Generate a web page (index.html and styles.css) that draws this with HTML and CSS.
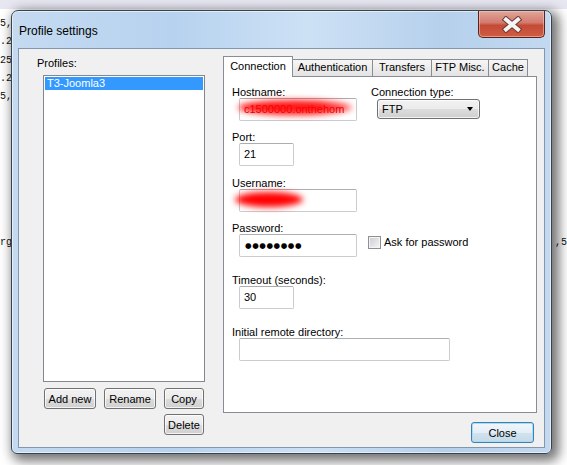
FILE: index.html
```html
<!DOCTYPE HTML>
<html>
    <head>
        <meta charset="UTF-8">
        <title>Profile settings</title>
        <link rel="stylesheet" href="styles.css">
    </head>
    <body>
        <div class="desktop">
            <div class="strip"></div>
            <!-- 窗口后面的编辑器文字 -->
            <div class="code">
                <div class="codeL">5,<br>.2<br>25<br>.2<br>5,</div>
                <div class="codeRow"><span>rg</span><span>,5</span></div>
            </div>

            <div class="window">
                <div class="titlebar">
                    <span class="title">Profile settings</span>
                    <button class="capClose">
                        <svg width="22" height="17" viewBox="0 0 22 17">
                            <path d="M5 3.5 L17 13.5 M17 3.5 L5 13.5" stroke="#6e3a33" stroke-width="6" stroke-linecap="square" fill="none"/>
                            <path d="M5 3.5 L17 13.5 M17 3.5 L5 13.5" stroke="#f4f4f4" stroke-width="4" stroke-linecap="square" fill="none"/>
                        </svg>
                    </button>
                </div>

                <div class="client">
                    <!-- 左侧：配置列表 -->
                    <div class="profiles">
                        <div class="lbl">Profiles:</div>
                        <div class="listbox">
                            <div class="item sel">T3-Joomla3</div>
                        </div>
                        <div class="btnRow">
                            <button class="btn w52">Add new</button>
                            <button class="btn w52">Rename</button>
                            <button class="btn w40">Copy</button>
                        </div>
                        <div class="btnRow end">
                            <button class="btn w40">Delete</button>
                        </div>
                    </div>

                    <!-- 右侧：选项卡 -->
                    <div class="right">
                        <div class="tabRow">
                            <div class="tab on" style="width:70px">Connection</div>
                            <div class="tab" style="width:81px">Authentication</div>
                            <div class="tab" style="width:60px">Transfers</div>
                            <div class="tab" style="width:58px">FTP Misc.</div>
                            <div class="tab" style="width:40px">Cache</div>
                        </div>
                        <div class="panel">
                            <div class="row">
                                <div class="field col1">
                                    <div class="cap">Hostname:</div>
                                    <div class="inWrap">
                                        <div class="inp w118 redText">c1500000.onthehom</div>
                                        <div class="blot host"></div>
                                    </div>
                                </div>
                                <div class="field">
                                    <div class="cap">Connection type:</div>
                                    <div class="combo"><span>FTP</span><i class="arrow"></i></div>
                                </div>
                            </div>

                            <div class="field gap">
                                <div class="cap">Port:</div>
                                <div class="inp w55">21</div>
                            </div>

                            <div class="field gap11">
                                <div class="cap">Username:</div>
                                <div class="inWrap">
                                    <div class="inp w118"></div>
                                    <div class="blot user"></div>
                                </div>
                            </div>

                            <div class="field gap">
                                <div class="cap">Password:</div>
                                <div class="inRow">
                                    <div class="inp w118 dots">●●●●●●●●</div>
                                    <label class="chk"><span class="box"></span>Ask for password</label>
                                </div>
                            </div>

                            <div class="field gapLg">
                                <div class="cap">Timeout (seconds):</div>
                                <div class="inp w55">30</div>
                            </div>

                            <div class="field gapLg">
                                <div class="cap">Initial remote directory:</div>
                                <div class="inp w211"></div>
                            </div>
                        </div>
                        <div class="foot">
                            <button class="btn def">Close</button>
                        </div>
                    </div>
                </div>
            </div>
        </div>
    </body>
</html>
```

FILE: styles.css
```css
body{margin:0;background:#fff;font-family:"Liberation Sans",Arial,sans-serif;font-size:11px;color:#000;}

.desktop{
    position:relative;
    width:567px;
    height:465px;
    overflow:hidden;
    background:#fff;
}
.strip{height:9px;background:#e7e7f2;}
.code{
    width:567px;
    margin-top:6px;
    font:10px/18.3px "Liberation Mono",monospace;
    color:#111;
}
.codeL{width:14px;}
.codeRow{display:flex;justify-content:space-between;margin-top:128px;}

/* 窗口外框（玻璃效果） */
.window{
    position:absolute;
    left:11px;
    top:10px;
    width:541px;
    height:444px;
    box-sizing:border-box;
    display:flex;
    flex-direction:column;
    padding:0 6px 5px;
    border:1px solid #37434f;
    border-radius:7px 7px 6px 6px;
    background:linear-gradient(to right,#c4daf1 0%,#b7d2ef 30%,#cde1f5 55%,#b6d0ec 80%,#c3d9f0 100%);
    box-shadow:4px 4px 12px 3px rgba(0,0,0,0.55),inset 0 0 0 1px rgba(255,255,255,0.55);
}
.titlebar{
    height:37px;
    display:flex;
    justify-content:space-between;
    align-items:flex-start;
}
.title{margin:13px 0 0 1px;font-size:12px;line-height:14px;}
.capClose{
    width:67px;
    height:27px;
    padding:0;
    display:flex;
    align-items:center;
    justify-content:center;
    border:1px solid #5c2219;
    border-top:0;
    border-radius:0 0 5px 5px;
    background:linear-gradient(#e2a59a,#d27a6e 45%,#c44a36 55%,#cf5d43);
    box-shadow:inset 0 0 0 1px rgba(255,210,200,0.5);
}

/* 客户区 */
.client{
    flex:1;
    display:flex;
    gap:18px;
    padding:7px 0 0 24px;
    background:#f0f0f0;
    border:1px solid #8297ad;
}
.profiles{width:162px;display:flex;flex-direction:column;}
.lbl{line-height:13px;margin:1px 0 5px -6px;}
.listbox{
    height:307px;
    box-sizing:border-box;
    border:1px solid #828790;
    background:#fff;
    padding:1px;
}
.item{height:13px;line-height:13px;padding-left:2px;}
.item.sel{background:#3399ff;color:#fff;}

.btnRow{display:flex;gap:8px;margin:6px 0 0 1px;}
.btnRow.end{justify-content:flex-end;margin:5px 1px 0 0;}
.btn{
    box-sizing:border-box;
    height:21px;
    padding:0;
    border:1px solid #707070;
    border-radius:3px;
    background:linear-gradient(#f2f2f2,#ebebeb 50%,#dddddd 50%,#cfcfcf);
    box-shadow:inset 0 0 0 1px rgba(255,255,255,0.75);
    font:11px "Liberation Sans",Arial,sans-serif;
    color:#000;
}
.w52{width:52px;}
.w40{width:40px;}
.btn.def{
    width:63px;
    border-color:#3c7fb1;
    background:linear-gradient(#f1f7fb,#e3eef6 50%,#d2e3ef 50%,#c5d9e8);
    box-shadow:inset 0 0 0 1px #a9dcf6;
}

.right{width:314px;display:flex;flex-direction:column;}
.tabRow{display:flex;align-items:flex-end;height:20px;}
.tab{
    box-sizing:border-box;
    height:17px;
    margin-left:-1px;
    border:1px solid #898c95;
    border-bottom:0;
    background:linear-gradient(#f6f6f6,#e3e3e3);
    text-align:center;
    line-height:15px;
    white-space:nowrap;
}
.tab.on{
    position:relative;
    z-index:1;
    height:21px;
    margin:0 0 -1px 0;
    background:#fff;
    line-height:18px;
}
.panel{
    box-sizing:border-box;
    height:337px;
    padding:9px 8px 0;
    border:1px solid #898c95;
    background:#fff;
}
.row{display:flex;}
.col1{width:139px;}
.gap{margin-top:10px;}
.gap11{margin-top:11px;}
.gapLg{margin-top:17px;}
.cap{line-height:12px;}

.inWrap{position:relative;}
.inp{
    box-sizing:border-box;
    height:23px;
    margin-left:7px;
    padding:0 4px;
    border:1px solid #c9ccd1;
    border-top-color:#abadb3;
    border-radius:2px;
    background:#fff;
    line-height:20px;
    overflow:hidden;
    white-space:nowrap;
}
.w118{width:118px;}
.w55{width:55px;}
.w211{width:211px;}
.redText{color:#d40000;}
.dots{font:7.5px/21px "DejaVu Sans",sans-serif;letter-spacing:0.6px;padding-left:5px;}

/* 涂抹遮挡 */
.blot{
    position:absolute;
    background:#ff0000;
    border-radius:50%;
    filter:blur(3px);
}
.blot.host{left:6px;top:2px;width:114px;height:15px;opacity:0.9;background:linear-gradient(to right,#ff0000 70%,rgba(255,0,0,0.7));}
.blot.user{left:3px;top:3px;width:68px;height:15px;}

.combo{
    box-sizing:border-box;
    width:103px;
    height:20px;
    margin:1px 0 0 6px;
    padding:0 6px 0 4px;
    display:flex;
    align-items:center;
    justify-content:space-between;
    border:1px solid #707070;
    border-radius:3px;
    background:linear-gradient(#f2f2f2,#ebebeb 50%,#dddddd 50%,#cfcfcf);
    box-shadow:inset 0 0 0 1px rgba(255,255,255,0.75);
}
.arrow{
    width:0;
    height:0;
    border-left:3.5px solid transparent;
    border-right:3.5px solid transparent;
    border-top:4px solid #000;
}

.inRow{display:flex;align-items:flex-start;}
.chk{display:flex;align-items:center;margin:2px 0 0 11px;line-height:13px;}
.box{
    box-sizing:border-box;
    width:13px;
    height:13px;
    margin-right:3px;
    border:1px solid #8f8f8f;
    background:linear-gradient(135deg,#c9cdd3,#f6f6f6);
    box-shadow:inset 0 0 0 1px #f4f4f4;
}

.foot{display:flex;justify-content:flex-end;margin:9px 3px 0 0;}
```
